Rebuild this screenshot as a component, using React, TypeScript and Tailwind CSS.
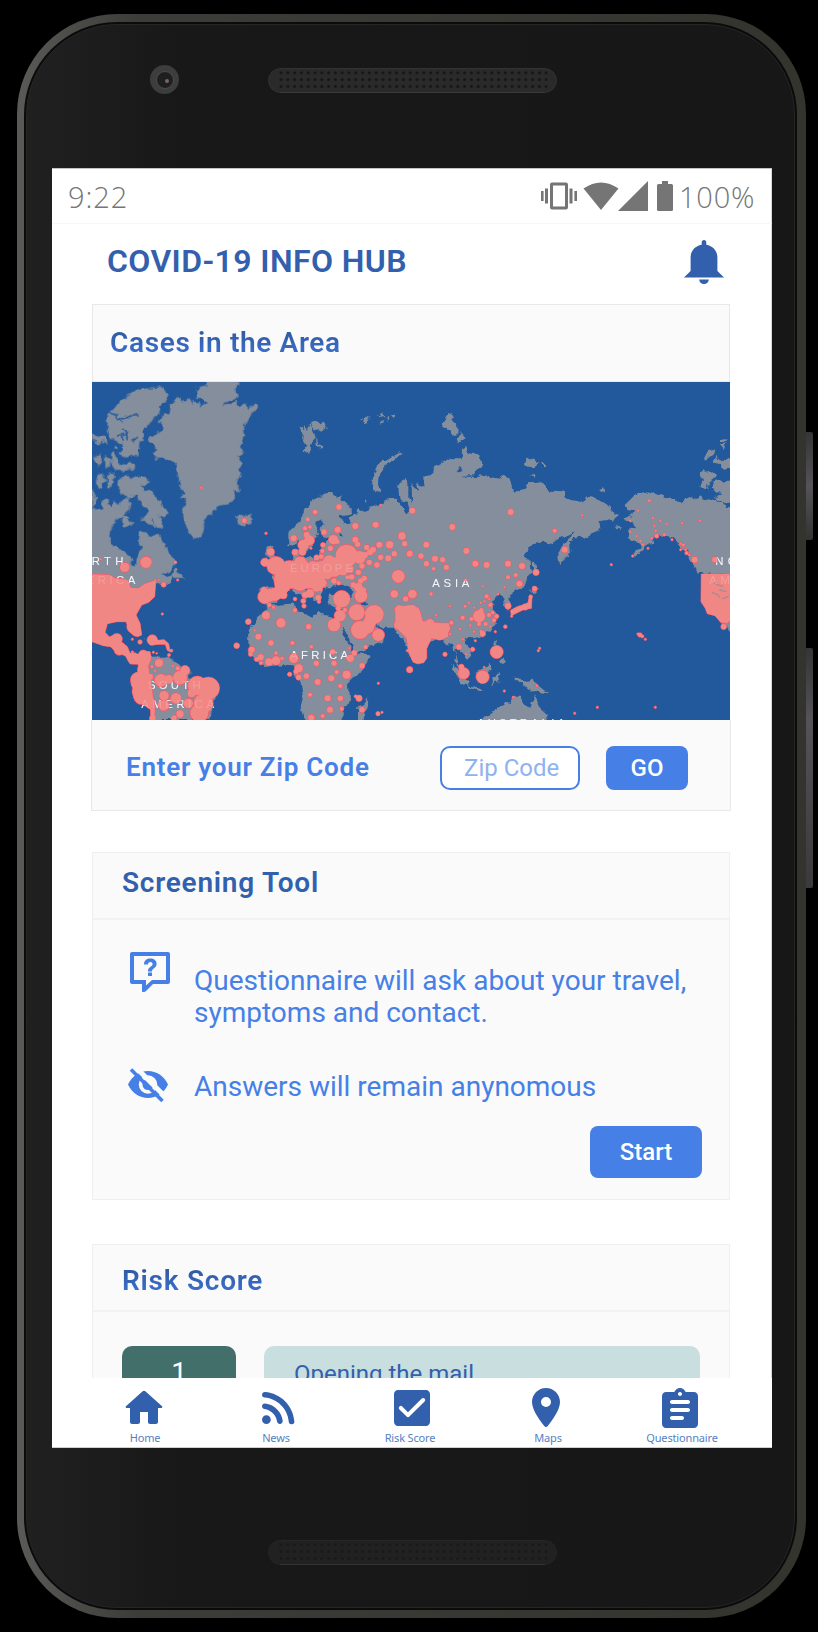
import React from "react";

type Dot = [number, number, number];

const WEST_LAND = [
  "M175 195L190 183 215 168 218 152 203 140 215 122 235 112 240 90 255 78 270 68 276 86 285 78 298 66 304 84 312 72 322 78 332 94 350 84 338 70 318 68 322 45 345 32 355 21 440 21 436 42 446 60 435 74 405 82 398 92 428 86 436 80 450 96 468 88 480 102 490 88 502 98 486 116 474 132 462 155 465 180 450 205 463 232 445 245 460 266 446 278 455 300 438 320 450 352 430 348 442 370 415 387 385 395 370 415 345 435 340 455 330 493 310 488 295 470 280 430 280 395 292 372 268 372 284 354 270 335 262 290 258 270 240 252 200 250 188 232 202 222 185 210Z",
  "M75 100L95 75 112 66 125 48 150 45 165 40 190 40 215 35 235 60 232 78 208 95 214 108 190 132 178 148 160 160 162 180 148 200 145 245 122 240 108 248 84 235 100 222 96 205 80 202 62 192 58 165 48 150 56 118 68 108Z",
  "M64 232L78 240 84 262 110 266 135 262 135 282 105 287 76 283 62 262Z",
  "M6 172L22 184 48 186 56 205 36 200 24 208 6 192Z",
  "M8 248L34 238 36 262 24 276 14 262Z",
  "M45 240L62 252 60 276 46 280Z",
  "M20 300L40 295 47 318 30 345 18 325Z",
  "M54 295L76 293 70 325 56 342 50 316Z",
  "M6 345L18 362 14 395 6 400Z",
  "M74 216l8 0 0 8-8 0Z",
  "M85 312L108 300 124 315 150 302 180 318 168 330 152 330 165 352 190 345 196 366 215 385 233 415 224 430 206 420 216 440 216 464 198 452 188 434 150 435 176 415 170 398 150 380 142 358 112 368 92 350 82 330Z",
  "M6 400L36 404 36 380 50 372 62 396 76 374 84 390 108 366 125 385 120 410 100 420 75 440 55 480 62 510 110 530 128 568 138 575 140 545 155 520 143 495 148 468 172 472 185 490 205 475 225 510 232 530 245 545 262 566 240 586 215 600 230 606 250 598 240 622 215 626 195 628 135 645 6 645Z",
  "M95 420L114 428 132 450 112 446 98 456Z",
  "M150 432L184 434 198 452 182 450 168 440Z",
  "M246 602L256 580 262 594 275 598 278 612 250 612Z",
  "M438 420L460 425 470 418 485 422 492 435 465 455 444 446Z",
  "M160 790L165 788 158 794Z",
  "M180 845L235 845 262 868 300 890 300 920 380 930 360 1034 185 1034 180 1000 130 960 125 920 145 880Z",
];

const CENTRAL_LAND = [
  "M45 705L75 690 138 685 142 708 166 716 190 728 200 713 250 728 262 740 275 745 280 780 300 815 315 835 360 838 352 862 325 895 297 922 300 975 296 986 275 1000 275 1044 165 1044 150 990 158 960 152 925 136 905 138 872 100 868 50 875 38 876 15 855 -3 835 -6 775 15 740 30 718Z",
  "M30 685L28 640 75 640 68 600 85 598 100 570 128 556 135 525 146 524 150 545 175 550 205 546 215 515 230 505 232 492 262 490 245 482 224 490 210 470 218 440 210 428 200 438 198 465 206 486 190 500 184 520 168 530 154 516 148 492 132 512 115 510 115 470 150 440 165 400 190 372 210 360 240 352 275 370 305 398 305 418 282 422 275 415 268 420 285 450 300 444 290 428 320 418 322 392 332 412 370 395 400 385 410 370 440 375 462 404 470 418 482 402 470 380 448 374 445 330 465 305 475 320 475 366 486 384 485 325 505 352 502 320 524 338 520 306 550 295 552 275 600 250 632 250 638 226 648 215 656 235 688 240 695 270 665 305 700 300 700 500 640 700 600 790 570 790 540 800 530 830 505 865 480 850 470 810 440 770 430 758 400 758 365 738 350 725 402 775 400 797 330 828 315 828 290 780 268 735 280 704 240 690 230 680 235 655 300 670 310 650 290 635 240 640 220 640 212 680 196 680 170 640 150 625 182 662 165 682 148 655 120 640 100 665 78 682 55 695Z",
  "M50 518L65 512 76 540 100 575 70 598 55 590 60 560 45 535Z",
  "M148 155L158 162 166 152 170 168 182 145 190 172 198 190 184 205 174 238 164 224 170 208 156 200 158 178Z",
  "M183 142L198 135 208 148 220 140 230 150 222 168 206 162 196 168 188 158Z",
  "M198 190L206 208 214 212 212 222 200 214Z",
  "M328 130L340 128 332 136ZM344 132L360 122 352 142 338 144ZM378 120L390 124 400 114 402 126 384 130ZM388 142L400 138 396 146ZM408 128L418 122 414 138ZM422 124L434 112 430 126Z",
  "M576 152L584 130 600 108 612 128 608 142 623 156 622 183 605 180 590 158Z",
  "M621 206L632 170 650 190 636 196Z",
  "M366 330L370 295 390 265 416 250 445 232 455 238 440 250 415 262 395 290 383 325 393 355 375 350Z",
  "M345 378l5-5 3 7-6 3Z",
  "M322 1044L325 994 345 985 355 968 354 990 338 1044Z",
];

const EAST_LAND = [
  "M30 300L90 306 130 300 150 306 180 312 190 302 205 310 220 350 262 340 265 322 290 320 318 330 332 350 370 352 380 372 430 382 435 364 470 370 500 388 516 405 536 420 524 442 508 430 475 440 478 465 452 476 432 492 415 484 390 498 392 530 372 550 360 575 355 540 366 512 388 496 402 465 380 484 360 490 345 505 315 500 278 508 247 545 258 552 272 555 274 592 255 625 240 642 205 665 210 692 200 705 188 665 175 658 155 680 168 690 158 704 175 725 168 750 140 775 120 785 100 790 72 788 76 806 98 830 85 852 62 832 50 815 44 830 50 852 66 885 48 866 40 810 20 808 0 790 -10 760 -80 600 -20 400Z",
  "M255 268L260 250 275 256 286 252 294 268 284 276 258 275Z",
  "M303 264L312 268 323 276 308 276ZM274 300l6-4 6 10-6 3Z",
  "M477 345L492 340 496 348 480 352Z",
  "M527 455l14 2 2 4-8-2Z",
  "M557 390L578 370 595 352 612 348 640 354 665 362 720 382 752 366 765 372 780 364 800 372 815 370 850 388 858 398 880 400 880 600 780 597 765 575 750 558 742 532 720 512 698 490 655 480 636 494 640 504 615 515 600 535 578 545 606 515 596 506 565 490 562 474 572 458 592 460 575 442 550 428 575 420 582 406 562 402Z",
  "M780 302L786 286 800 292 808 284 828 300 820 316 808 322 800 345 778 332 786 316Z",
  "M816 328L832 310 850 322 880 318 880 386 850 384 822 366 844 358 822 348Z",
  "M792 250L802 232 826 220 822 238 800 256ZM820 258L830 240 846 262 880 240 880 278 852 284 836 270ZM845 192L856 186 864 196 846 200ZM843 210L860 205 852 222Z",
  "M278 558L286 560 290 590 298 598 280 606Z",
  "M278 632L298 638 286 650 274 650Z",
  "M28 870L52 882 70 902 86 920 84 936 62 920 44 890Z",
  "M84 934L110 938 132 946 122 948 90 940Z",
  "M106 894L128 882 145 864 155 882 148 896 140 920 115 922Z",
  "M157 908L170 896 186 896 172 904 176 928 168 918 160 930Z",
  "M162 802l6-4 6 26-10-10ZM178 858l12-8 8 10-6 8Z",
  "M162 768l6-4 0 8-4 4Z",
  "M222 905L236 906 250 920 272 914 292 924 302 938 325 955 306 952 290 944 266 948 248 930Z",
  "M120 1044L140 1020 170 1008 178 992 195 980 212 984 216 968 230 962 246 966 246 984 270 998 276 980 282 958 290 976 300 998 318 1014 324 1044Z",
  "M835 735L850 742 880 735 880 770 850 752Z",
];

const WEST_HOT =
  "M6 598L60 600 75 610 112 614 122 638 145 640 165 626 198 616 196 635 194 665 176 682 155 690 138 720 150 745 155 780 142 785 122 774 108 740 80 740 52 746 45 772 58 786 72 780 90 778 96 790 94 800 112 815 120 835 145 838 152 828 180 830 184 850 172 880 182 905 188 960 195 1005 192 1034 182 1034 182 1004 155 985 130 968 134 948 124 930 128 905 145 890 145 868 120 866 106 842 78 832 62 815 40 812 6 800Z";
const WEST_HOT_2 =
  "M172 796L185 782 205 796 222 794 236 806 240 830 232 826 226 808 204 808 180 810Z";
const CENTRAL_HOT =
  "M436 715L440 695 465 692 490 690 508 702 518 738 545 742 575 745 598 745 594 785 570 795 545 790 530 820 530 850 520 864 490 862 475 830 470 790 436 755Z";
const EUROPE_HOT =
  "M75 600L100 570 128 560 160 545 175 565 230 555 262 545 300 560 300 590 270 600 225 610 215 650 190 640 160 640 120 640 100 665 60 680 35 670 40 645 75 640Z";
const EAST_HOT =
  "M784 597L870 597 870 738 860 745 842 742 825 722 802 716 796 700 783 680Z";
const JAPAN_HOT =
  "M212 706L230 696 250 690 264 684 268 664 276 662 274 700 250 704 222 718 214 724Z";

const WEST_DOTS: Dot[] = [
  [334, 338, 4], [463, 437, 8], [528, 475, 4], [168, 562, 18], [104, 577, 15], [256, 562, 5], [32, 553, 4],
  [263, 615, 4], [221, 629, 8], [206, 615, 3], [196, 615, 3], [217, 717, 4], [475, 740, 9], [440, 812, 9],
  [494, 766, 4], [127, 793, 4], [150, 801, 7], [127, 831, 4], [187, 795, 16], [244, 827, 5], [237, 840, 5],
  [190, 832, 4], [200, 835, 3], [80, 792, 17], [60, 800, 14], [130, 850, 18], [88, 825, 16], [160, 840, 15],
  [145, 915, 24], [150, 950, 24], [160, 885, 18], [180, 980, 14], [155, 965, 24],
  [207, 864, 13], [186, 875, 5], [195, 887, 4], [180, 905, 10], [248, 872, 4], [263, 880, 7], [285, 886, 15],
  [270, 908, 22], [213, 916, 20], [236, 913, 14], [222, 962, 15], [221, 991, 17], [258, 970, 17], [295, 985, 15],
  [305, 955, 13], [355, 940, 34], [322, 932, 29], [340, 985, 30], [328, 1014, 28], [270, 1017, 12],
  [252, 1029, 9], [188, 1030, 10], [130, 755, 20], [25, 790, 16], [138, 770, 14],
];

const CENTRAL_DOTS: Dot[] = [
  [267, 396, 9], [195, 411, 8], [173, 433, 7], [165, 460, 7], [180, 456, 6], [131, 490, 10], [222, 471, 9],
  [263, 464, 10], [316, 453, 10], [377, 449, 10], [392, 391, 4], [487, 407, 10], [456, 483, 12], [464, 506, 9],
  [607, 456, 10], [316, 494, 10], [323, 508, 9], [388, 509, 10], [419, 509, 12], [350, 517, 9], [369, 524, 10],
  [433, 536, 9], [479, 536, 10], [415, 550, 10], [392, 547, 9], [358, 562, 9], [381, 570, 9], [529, 509, 10],
  [513, 543, 9], [529, 566, 9], [555, 551, 10], [578, 554, 9], [589, 577, 9], [551, 581, 6], [649, 528, 10],
  [676, 566, 10], [710, 570, 10], [445, 604, 20], [433, 657, 12], [487, 657, 14], [467, 672, 9], [543, 657, 6],
  [647, 615, 4], [48, 475, 4], [250, 494, 15], [262, 500, 8], [241, 520, 9], [219, 510, 8], [217, 528, 7],
  [78, 572, 28], [62, 531, 12], [45, 562, 13], [38, 563, 6], [98, 615, 27], [140, 600, 38], [118, 588, 32],
  [150, 622, 26], [45, 665, 22], [75, 658, 20], [100, 660, 12], [42, 645, 10], [160, 510, 17], [178, 496, 16],
  [170, 480, 10], [157, 530, 12], [150, 562, 18], [188, 575, 18], [212, 594, 20], [238, 560, 20], [290, 542, 34],
  [328, 547, 20], [360, 532, 10], [345, 540, 10], [268, 565, 16], [232, 600, 14], [255, 592, 14], [300, 582, 12],
  [280, 590, 12], [200, 636, 15], [217, 624, 14], [180, 655, 13], [165, 660, 10], [160, 678, 8], [162, 693, 7],
  [205, 668, 9], [135, 532, 10], [200, 548, 9], [214, 545, 8], [252, 618, 9], [266, 624, 7], [135, 672, 6],
  [135, 706, 7], [70, 697, 5], [58, 690, 7], [183, 520, 4], [207, 680, 6],
  [275, 672, 26], [265, 700, 8], [252, 750, 20], [270, 722, 18], [285, 705, 7], [320, 712, 25], [373, 718, 29],
  [330, 765, 28], [352, 755, 22], [385, 780, 19], [360, 740, 20], [333, 663, 20], [325, 637, 14], [310, 630, 9],
  [343, 610, 9], [332, 618, 9], [305, 606, 9], [325, 592, 9], [336, 573, 9], [292, 607, 7], [340, 645, 9],
  [448, 705, 15], [480, 715, 25], [445, 750, 14], [540, 745, 14], [570, 770, 25], [505, 845, 22], [500, 800, 28],
  [585, 760, 16], [472, 827, 4], [479, 884, 10], [585, 838, 7], [558, 721, 4], [600, 694, 4],
  [48, 721, 13], [93, 744, 15], [176, 755, 9], [25, 785, 10], [63, 804, 9], [127, 804, 7], [184, 815, 6],
  [78, 834, 6], [32, 847, 10], [20, 853, 7], [33, 864, 6], [57, 861, 12], [78, 857, 14], [96, 850, 6], [131, 850, 15],
  [5, 824, 10], [2, 838, 7], [119, 898, 7], [146, 880, 13], [138, 890, 8], [146, 907, 9], [169, 903, 9],
  [199, 865, 9], [252, 865, 9], [248, 830, 9], [260, 891, 7], [290, 899, 13], [244, 910, 10], [203, 921, 10],
  [271, 933, 7], [180, 959, 7], [233, 970, 10], [271, 970, 9], [240, 1004, 10], [275, 1001, 7], [218, 1023, 7],
  [184, 1028, 10], [301, 850, 12], [313, 834, 9], [298, 819, 4], [347, 816, 7], [336, 872, 9], [385, 925, 4],
  [327, 970, 10], [317, 964, 5], [336, 1004, 9], [384, 1016, 7], [396, 1012, 4],
];

const EAST_DOTS: Dot[] = [
  [212, 411, 10], [427, 421, 4], [344, 467, 7], [374, 524, 10], [204, 566, 10], [246, 573, 10], [204, 607, 7],
  [227, 600, 7], [238, 626, 10], [193, 637, 4], [288, 592, 10], [284, 641, 8], [128, 634, 4], [272, 665, 6],
  [514, 569, 4], [204, 693, 10], [174, 657, 4], [140, 664, 7], [148, 672, 4], [151, 690, 7], [122, 683, 4],
  [133, 679, 4], [87, 683, 4], [75, 694, 5], [102, 698, 3], [30, 694, 4], [117, 724, 19], [124, 706, 8],
  [94, 732, 7], [147, 720, 7], [158, 713, 6], [170, 724, 7], [162, 736, 7], [68, 728, 7], [117, 747, 7],
  [137, 747, 7], [151, 755, 4], [91, 751, 4], [60, 762, 4], [102, 770, 4], [128, 776, 9], [123, 769, 5],
  [34, 743, 7], [30, 777, 4], [68, 793, 4], [106, 797, 4], [57, 816, 9], [98, 823, 7], [79, 838, 4],
  [196, 755, 6], [166, 770, 4], [170, 831, 20], [71, 895, 18], [64, 876, 9], [128, 906, 20], [132, 876, 3],
  [193, 948, 4], [220, 967, 4], [291, 932, 4], [215, 724, 4], [255, 696, 10], [240, 700, 8], [266, 690, 8],
  [299, 820, 4], [295, 827, 4], [600, 780, 7], [607, 784, 5], [594, 777, 4], [616, 793, 4], [472, 997, 4],
  [404, 1015, 4], [646, 997, 4], [628, 377, 5], [594, 407, 4], [571, 437, 4], [639, 430, 4], [661, 437, 4],
  [643, 452, 4], [647, 467, 4], [680, 448, 4], [726, 445, 4], [779, 437, 4], [571, 471, 4], [590, 483, 4],
  [601, 497, 4], [609, 509, 4], [650, 483, 7], [635, 490, 4], [673, 479, 5], [696, 494, 4], [624, 520, 4],
  [578, 543, 4], [722, 506, 4], [730, 510, 5], [722, 524, 4], [737, 524, 4], [740, 534, 6], [748, 540, 4],
  [764, 554, 10], [824, 554, 9], [851, 755, 9], [815, 700, 18],
];

function HotSpots({ areas, dots }: { areas: string[]; dots: Dot[] }) {
  return (
    <g strokeLinejoin="round">
      <g fill="#fb5566" stroke="#fb5566" strokeWidth="3">
        {areas.map((d) => <path key={d} d={d} />)}
        {dots.map(([x, y, r], i) => <circle key={i} cx={x} cy={y} r={r - 0.5} />)}
      </g>
      <g fill="#f18785">
        {areas.map((d) => <path key={d} d={d} />)}
        {dots.map(([x, y, r], i) => <circle key={i} cx={x} cy={y} r={Math.max(r - 1, 2.5)} />)}
      </g>
    </g>
  );
}

function MapLabels() {
  return (
    <g fill="#f4f6f9" fontFamily="'Liberation Sans', sans-serif" fontSize="34">
      <text x="-78" y="550" textLength="172">NORTH</text>
      <text x="-88" y="606" textLength="218">AMERICA</text>
      <text x="168" y="921" textLength="158">SOUTH</text>
      <text x="148" y="977" textLength="218">AMERICA</text>
      <text x="594" y="570" textLength="189">EUROPE</text>
      <text x="1021" y="615" textLength="111">ASIA</text>
      <text x="595" y="831" textLength="173">AFRICA</text>
      <text x="1870" y="550" textLength="172">NORTH</text>
      <text x="1852" y="606" textLength="218">AMERICA</text>
      <text x="1155" y="1036" textLength="264">AUSTRALIA</text>
    </g>
  );
}

function WorldMap() {
  return (
    <svg viewBox="0 0 1914 1014" className="block h-[338px] w-[638px] bg-[#21599c]">
      <defs>
        <filter id="coast" x="-20" y="-20" width="1954" height="1054" filterUnits="userSpaceOnUse" colorInterpolationFilters="sRGB">
          <feTurbulence type="fractalNoise" baseFrequency="0.05" numOctaves="2" seed="4" result="n" />
          <feDisplacementMap in="SourceGraphic" in2="n" scale="20" xChannelSelector="R" yChannelSelector="G" />
        </filter>
      </defs>
      <g fill="#848e9d" filter="url(#coast)">
        <g transform="translate(-6 -21)">
          {WEST_LAND.map((d) => <path key={d} d={d} />)}
          <path d="M350 30V5H445V30ZM-10 402H8V645H-10Z" />
          <path d="M52 112L80 120 86 132 112 124 146 122M86 132L100 142M76 182L100 182 112 176 116 196M100 182L98 196M128 200L140 186M0 216L60 214M6 294L40 290M110 180L100 165" fill="none" stroke="#21599c" strokeWidth="5" />
        </g>
        <g transform="translate(474 -21)">
          {CENTRAL_LAND.map((d) => <path key={d} d={d} />)}
        </g>
        <g transform="translate(1044 -21)">
          {EAST_LAND.map((d) => <path key={d} d={d} />)}
          <path d="M53 282l10-4 4 10-10 4Z" fill="#21599c" />
          <path d="M60 305L90 304 118 292 88 309Z" fill="#21599c" />
        </g>
        <g transform="translate(474 -21)" fill="#21599c">
          <path d="M238 645L252 628 280 630 312 652 290 658 255 652Z" />
          <path d="M272 472l10 2-4 8-6-3ZM318 650L328 640 340 670 352 690 340 692 326 672Z" />
        </g>
      </g>
      <MapLabels />
      <g transform="translate(-6 -21)"><HotSpots areas={[WEST_HOT, WEST_HOT_2]} dots={WEST_DOTS} /></g>
      <g transform="translate(474 -21)"><HotSpots areas={[CENTRAL_HOT, EUROPE_HOT]} dots={CENTRAL_DOTS} /></g>
      <g transform="translate(1044 -21)">
        <HotSpots areas={[EAST_HOT, JAPAN_HOT]} dots={EAST_DOTS} />
        <path d="M815 652L832 658 840 668M838 645L860 650M828 628L850 634M846 672L866 664M822 626l6-6" fill="none" stroke="#a58b92" strokeWidth="4" />
      </g>
      <g opacity="0.2" aria-hidden="true"><MapLabels /></g>
    </svg>
  );
}

function Speaker({ dim }: { dim?: boolean }) {
  return (
    <svg viewBox="0 0 289 25" className="block h-[25px] w-[289px]">
      <defs>
        <pattern id="grille" width="6.8" height="6.8" patternUnits="userSpaceOnUse" x="9.6" y="1.4">
          <circle cx="3.4" cy="3.4" r="1.5" fill="#151515" />
        </pattern>
      </defs>
      <rect x="0.5" y="0.5" width="288" height="24" rx="12" fill={dim ? "#212121" : "#2a2a2a"} stroke={dim ? "#262626" : "#323232"} />
      <path d="M12 24.4H277" stroke={dim ? "#353535" : "#3c3c3c"} />
      <rect x="9.6" y="1.4" width="270" height="20.4" fill="url(#grille)" opacity={dim ? 0.7 : 1} />
    </svg>
  );
}

function StatusIcons() {
  return (
    <svg viewBox="0 0 134 32" className="block h-[32px] w-[134px]" fill="#757575">
      <path d="M0 11h2.6v10H0zM4 8.5h3v15H4zM28.5 8.5h3v15h-3zM33.4 11H36v10h-2.6z" />
      <path fillRule="evenodd" d="M11 2.5h14a2 2 0 0 1 2 2v23a2 2 0 0 1-2 2H11a2 2 0 0 1-2-2v-23a2 2 0 0 1 2-2zM12 5.500v21h12v-21z" />
      <path d="M42.500 8.500Q60 -3.500 77.500 8.500L60 30z" />
      <path d="M77 31L107 1v30z" />
      <path d="M121 1h6v3h3.500q1.500 0 1.500 1.500v24q0 1.500-1.500 1.500h-13q-1.500 0-1.500-1.500v-24q0-1.500 1.500-1.500h3.500z" />
    </svg>
  );
}

function Bell() {
  return (
    <svg viewBox="0 0 40 44" className="block h-[44px] w-[40px]" fill="#3260ad">
      <path d="M20 0c1.400 0 2.300 1 2.300 2.400V4.800C29 6 33.400 11 33.400 17.500V31L40 37.500H0L6.600 31V17.500C6.600 11 11 6 17.700 4.800V2.400C17.700 1 18.600 0 20 0z" />
      <path d="M15.200 39.500h9.600a4.800 4.500 0 0 1-9.600 0z" />
    </svg>
  );
}

const NAV = [
  {
    label: "Home",
    icon: "M10 19v-5h4v5c0 .55.45 1 1 1h3c.55 0 1-.45 1-1v-7h1.700c.46 0 .68-.57.33-.87L12.670 3.600c-.38-.34-.96-.34-1.340 0l-8.360 7.530c-.34.3-.13.87.33.87H5v7c0 .55.45 1 1 1h3c.55 0 1-.45 1-1z",
    column: "ml-[68px] w-[48px]",
    textShift: "left-[1px]",
  },
  {
    label: "News",
    icon: "M6.200 15.640A2.180 2.180 0 1 0 6.200 20a2.180 2.180 0 0 0 0-4.360zM4 5.400c0 .73.55 1.330 1.270 1.400 6.440.58 11.500 5.600 12.100 12a1.400 1.400 0 1 0 2.820-.2C19.500 10.700 13.400 4.600 5.540 3.950 4.700 3.880 4 4.560 4 5.400zm0 5.700c0 .7.520 1.300 1.210 1.390 3.300.42 5.900 3.030 6.320 6.310.09.7.690 1.210 1.390 1.210.85 0 1.530-.75 1.420-1.600a10.020 10.020 0 0 0-8.700-8.700C4.770 9.580 4 10.250 4 11.100z",
    column: "ml-[86px] w-[48px]",
    textShift: "-left-[2px]",
  },
  {
    label: "Risk Score",
    icon: "M19 3H5c-1.100 0-2 .9-2 2v14c0 1.100.9 2 2 2h14c1.100 0 2-.9 2-2V5c0-1.100-.9-2-2-2zm-8.290 13.290c-.39.39-1.020.39-1.410 0L5.710 12.700a.996.996 0 1 1 1.410-1.410L10 14.170l6.880-6.880a.996.996 0 1 1 1.410 1.410l-7.580 7.590z",
    column: "ml-[86px] w-[48px]",
    textShift: "-left-[2px]",
  },
  {
    label: "Maps",
    icon: "M12 2C8.130 2 5 5.130 5 9c0 4.170 4.420 9.920 6.240 12.110.4.48 1.130.48 1.530 0C14.580 18.920 19 13.170 19 9c0-3.870-3.130-7-7-7zm0 9.500a2.500 2.500 0 0 1 0-5 2.500 2.500 0 0 1 0 5z",
    column: "ml-[86px] w-[48px]",
    textShift: "left-[2px]",
  },
  {
    label: "Questionnaire",
    icon: "M19 4h-4.180C14.400 2.840 13.300 2 12 2s-2.400.84-2.820 2H5c-1.100 0-2 .9-2 2v14c0 1.100.9 2 2 2h14c1.100 0 2-.9 2-2V6c0-1.100-.9-2-2-2zm-7 0c.55 0 1 .45 1 1s-.45 1-1 1-1-.45-1-1 .45-1 1-1zm1 14H8c-.55 0-1-.45-1-1s.45-1 1-1h5c.55 0 1 .45 1 1s-.45 1-1 1zm3-4H8c-.55 0-1-.45-1-1s.45-1 1-1h8c.55 0 1 .45 1 1s-.45 1-1 1zm0-4H8c-.55 0-1-.45-1-1s.45-1 1-1h8c.55 0 1 .45 1 1s-.45 1-1 1z",
    column: "ml-[86px] w-[48px]",
    textShift: "left-[2px]",
  },
];

function QuestionIcon() {
  return (
    <svg viewBox="2 2 20 20" className="mt-[32px] ml-[37px] block size-[40px] shrink-0" fill="#4680e6">
      <path fillRule="evenodd" d="M3 2h18a1 1 0 0 1 1 1v14a1 1 0 0 1-1 1h-7.500L10 21.500Q9 22.400 8 21.700V18H3a1 1 0 0 1-1-1V3a1 1 0 0 1 1-1zM4 4v12h6v2.700L13 16h7V4z" />
      <path d="M11 12.300h2V14h-2zM9 8.200C9 6.300 10.400 5.300 12.200 5.300S15.300 6.300 15.300 7.900C15.300 10.200 13 10.100 13 11.700H11C11 9.200 13.300 9.500 13.300 8 13.300 7.400 12.800 7 12.200 7S11 7.400 11 8.200z" />
    </svg>
  );
}

function HiddenIcon() {
  return (
    <svg viewBox="0 0 40 34" className="ml-[35px] block h-[34px] w-[40px] shrink-0">
      <path d="M0 16.500C4 8 11.500 3 20 3s16 5 20 13.500C36 25 28.500 30 20 30S4 25 0 16.500z" fill="#4680e6" />
      <circle cx="20" cy="16.500" r="9.200" fill="#fafafa" />
      <circle cx="20" cy="16.500" r="5.500" fill="#4680e6" />
      <path d="M6-2.500L40 31.500" stroke="#fafafa" strokeWidth="5" />
      <path d="M3 1.500L34.500 33" stroke="#4680e6" strokeWidth="3.600" />
    </svg>
  );
}

export default function App() {
  return (
    <div className="relative flex h-[1632px] w-[818px] overflow-hidden bg-black pt-[14px] pl-[17px] font-['Roboto',sans-serif]">
      <div className="absolute top-[432px] left-[804px] h-[108px] w-[9px] rounded-r-[2px] bg-linear-to-b from-[#353437] via-[#555357] to-[#333]" />
      <div className="absolute top-[648px] left-[804px] h-[240px] w-[9px] rounded-r-[2px] bg-linear-to-b from-[#353437] via-[#555357] via-30% to-[#3b393c]" />
      <div className="relative h-[1604px] w-[789px] rounded-[100px] bg-linear-to-r from-[#5a5a58] via-[#3c3c38] via-15% to-[#33342e] pt-[8px] pr-[9px] pb-[8px] pl-[7px]">
        <div className="h-[1588px] w-[773px] rounded-[93px] bg-[#0b0b0b] p-[2px]">
          <div className="h-[1584px] w-[769px] rounded-[91px] border border-[#262626] bg-linear-to-r from-[#202020] via-[#181818] via-20% to-[#171717] pl-[25px]">
            <div className="flex h-[143px] pl-[98px]">
              <div className="mt-[40px] flex size-[29px] items-center justify-center rounded-full bg-[#3d3d3d]">
                <div className="flex size-[18px] items-center justify-center rounded-full border border-[#4d4d4d] bg-[#1f1f22] pt-[3px] pl-[4px]">
                  <div className="size-[4px] rounded-full bg-[#75666a]" />
                </div>
              </div>
              <div className="mt-[43px] ml-[89px]"><Speaker /></div>
            </div>

            <div className="h-[1280px] w-[720px] bg-white shadow-[inset_0_1px_0_#c4c4c4,inset_-1px_0_0_#d8d8d8]">
              <div className="flex h-[56px] items-center border-b border-[#f7f7f7] pr-[12px] pl-[16px] font-['Open_Sans',sans-serif] text-[29px] font-light text-[#757575]">
                <span className="pt-[3px] tracking-[0.9px]">9:22</span>
                <span className="mr-[4px] ml-auto"><StatusIcons /></span>
                <span className="w-[81px] pt-[3px] tracking-[0.8px]">100%</span>
              </div>

              <div className="flex h-[80px] items-center justify-between pr-[48px] pl-[55px]">
                <h1 className="pb-[7px] text-[32px] font-semibold tracking-[0.4px] text-[#3260ad]">COVID-19 INFO HUB</h1>
                <div className="pb-[4px]"><Bell /></div>
              </div>

              <div className="h-[1074px] overflow-hidden px-[40px]">
                <section>
                  <div className="flex h-[78px] w-[638px] items-center border border-[#e8e8e8] bg-[#fafafa] pb-[1px] pl-[17px]">
                    <h2 className="bg-linear-to-b from-[#305aa3] from-25% to-[#3e74d6] to-85% bg-clip-text text-[28px] font-semibold tracking-[0.65px] text-transparent">Cases in the Area</h2>
                  </div>
                  <WorldMap />
                  <div className="-mx-px flex h-[91px] w-[640px] items-center border border-t-0 border-[#e8e8e8] bg-[#fafafa] pl-[34px]">
                    <span className="w-[314px] pt-[4px] text-[26px] font-semibold tracking-[0.75px] text-[#4680e6]">Enter your Zip Code</span>
                    <input
                      placeholder="Zip Code"
                      className="mt-[5px] h-[44px] w-[140px] rounded-[10px] border-2 border-[#4680e6] bg-white pl-[22px] text-[24px] outline-none placeholder:text-[#8fb2f0]"
                    />
                    <button className="mt-[5px] ml-[26px] h-[44px] w-[82px] rounded-[8px] bg-[#4680e6] text-[24px] font-medium text-white">GO</button>
                  </div>
                </section>

                <section className="mt-[41px] h-[348px] w-[638px] border border-[#efefef] bg-[#fafafa]">
                  <div className="flex h-[67px] items-center border-b-2 border-[#f2f2f2] pb-[5px] pl-[29px]">
                    <h2 className="text-[28px] font-semibold tracking-[0.75px] text-[#3260ad]">Screening Tool</h2>
                  </div>
                  <div className="flex h-[148px] text-[28px] leading-[32px] text-[#4680e6]">
                    <QuestionIcon />
                    <p className="mt-[45px] ml-[24px] whitespace-pre">{"Questionnaire will ask about your travel,\nsymptoms and contact."}</p>
                  </div>
                  <div className="flex h-[34px] items-center text-[28px] text-[#4680e6]">
                    <HiddenIcon />
                    <span className="ml-[26px] pt-[4px] whitespace-nowrap">Answers will remain anynomous</span>
                  </div>
                  <div className="mt-[24px] flex justify-end pr-[27px]">
                    <button className="h-[52px] w-[112px] rounded-[8px] bg-[#4680e6] text-[24px] font-medium text-white">Start</button>
                  </div>
                </section>

                <section className="mt-[44px] h-[240px] w-[638px] border border-[#efefef] bg-[#fafafa]">
                  <div className="flex h-[67px] items-center border-b-2 border-[#f2f2f2] pt-[6px] pl-[29px]">
                    <h2 className="bg-linear-to-b from-[#305aa3] from-25% to-[#3e74d6] to-85% bg-clip-text text-[28px] font-semibold tracking-[0.75px] text-transparent">Risk Score</h2>
                  </div>
                  <div className="flex gap-[28px] pt-[34px] pl-[29px]">
                    <div className="h-[80px] w-[114px] rounded-[10px] bg-[#426f69] pt-[11px] text-center text-[28px] leading-[32px] text-white">1</div>
                    <div className="h-[80px] w-[436px] rounded-[10px] bg-[#c9dedf] pt-[13px] pl-[30px] text-[24px] leading-[30px] text-[#3260ad]">Opening the mail</div>
                  </div>
                </section>
              </div>

              <nav className="flex h-[70px] border-b border-[#c9d3cd] bg-white pt-[6px]">
                {NAV.map((item) => (
                  <div key={item.label} className={`flex shrink-0 flex-col items-center ${item.column}`}>
                    <svg viewBox="0 0 24 24" fill="#3260ad" className="block size-[48px] shrink-0">
                      <path fillRule="evenodd" d={item.icon} />
                    </svg>
                    <span className={`relative -mt-[2px] font-['Noto_Sans',sans-serif] text-[11px] leading-[16px] tracking-[-0.15px] whitespace-nowrap text-[#5680c2] ${item.textShift}`}>
                      {item.label}
                    </span>
                  </div>
                ))}
              </nav>
            </div>

            <div className="mt-[92px] ml-[216px]"><Speaker dim /></div>
          </div>
        </div>
      </div>
    </div>
  );
}
